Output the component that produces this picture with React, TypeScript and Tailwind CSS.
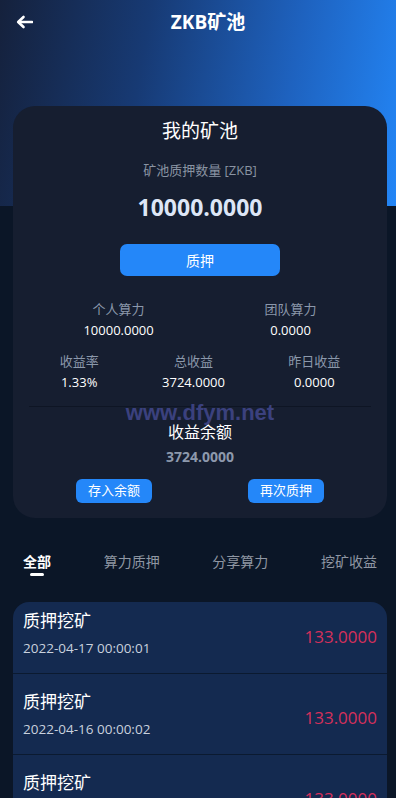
import React from "react";

const items = [
  { t: "质押挖矿", d: "2022-04-17 00:00:01", a: "133.0000" },
  { t: "质押挖矿", d: "2022-04-16 00:00:02", a: "133.0000" },
  { t: "质押挖矿", d: "2022-04-15 00:00:01", a: "133.0000" },
];

function Stat({ label, value }: { label: string; value: string }) {
  return (
    <div className="flex flex-col items-center">
      <div className="text-[13px] leading-[20px] text-[#8b98ab]">{label}</div>
      <div className="mt-[1px] text-[13px] leading-[20px] text-white">{value}</div>
    </div>
  );
}

export default function App() {
  return (
    <div className="h-[798px] w-[396px] overflow-hidden bg-[#0b1627]">
      <div
        className="relative h-[798px] w-[400px] bg-[#0b1627]"
        style={{ fontFamily: '"Open Sans", "Noto Sans CJK SC", sans-serif' }}
      >
        <div className="h-[206px] bg-[linear-gradient(100deg,#15213c_0%,#173a74_35%,#1e62bf_70%,#2387f8_100%)]">
          <div className="relative flex h-[44px] items-center justify-center pl-[16px]">
            <svg
              className="absolute left-[16px] top-[15px]"
              width="17"
              height="14"
              viewBox="0 0 17 14"
              fill="none"
            >
              <path d="M16 7H3" stroke="white" strokeWidth="2.6" strokeLinecap="round" />
              <path d="M7.5 2L2.2 7l5.3 5" stroke="white" strokeWidth="2.6" strokeLinecap="round" strokeLinejoin="round" />
            </svg>
            <div className="text-[19px] font-bold leading-[24px] text-white">ZKB矿池</div>
          </div>
        </div>

        <div className="relative mx-[13px] -mt-[100px] rounded-[22px] bg-[#161e30] px-[15px] pt-[13px] pb-[15px]">
          <div className="text-center text-[19px] leading-[24px] text-white">我的矿池</div>
          <div className="mt-[17px] text-center text-[13px] leading-[20px] text-[#8a94a3]">矿池质押数量 [ZKB]</div>
          <div className="mt-[12px] text-center text-[23px] font-bold leading-[30px] text-[#dde6f6]">10000.0000</div>
          <div className="mt-[22px] flex justify-center">
            <div className="flex h-[32px] w-[160px] items-center justify-center rounded-[7px] bg-[#2487f9] text-[14px] text-white">
              质押
            </div>
          </div>
          <div className="mt-[23px] flex justify-around">
            <Stat label="个人算力" value="10000.0000" />
            <Stat label="团队算力" value="0.0000" />
          </div>
          <div className="mt-[11px] flex justify-around">
            <Stat label="收益率" value="1.33%" />
            <Stat label="总收益" value="3724.0000" />
            <Stat label="昨日收益" value="0.0000" />
          </div>
          <div className="mx-[1px] mt-[14px] h-px bg-[#0e1524]" />
          <div className="mt-[13px] text-center text-[16px] leading-[24px] text-white">收益余额</div>
          <div className="mt-[3px] text-center text-[14px] font-bold leading-[20px] text-[#8d99ac]">3724.0000</div>
          <div className="mt-[12px] flex justify-around">
            <div className="flex h-[24px] w-[76px] items-center justify-center rounded-[6px] bg-[#2487f9] text-[13px] text-white">
              存入余额
            </div>
            <div className="flex h-[24px] w-[76px] items-center justify-center rounded-[6px] bg-[#2487f9] text-[13px] text-white">
              再次质押
            </div>
          </div>
          <div
            className="pointer-events-none absolute left-0 right-0 top-[294px] text-center text-[22px] font-bold leading-[26px] text-[#3b417e]"
            style={{ fontFamily: '"Liberation Sans", Arial, sans-serif' }}
          >
            www.dfym.net
          </div>
        </div>

        <div className="mt-[34px] flex items-start justify-between px-[23px]">
          <div className="flex flex-col items-center">
            <div className="text-[14px] font-bold leading-[20px] text-white">全部</div>
            <div className="mt-[1px] h-[3px] w-[14px] rounded-full bg-white" />
          </div>
          <div className="text-[14px] leading-[20px] text-[#8f96a3]">算力质押</div>
          <div className="text-[14px] leading-[20px] text-[#8f96a3]">分享算力</div>
          <div className="text-[14px] leading-[20px] text-[#8f96a3]">挖矿收益</div>
        </div>

        <div className="mx-[13px] mt-[26px] overflow-hidden rounded-t-[16px] bg-[#142a50]">
          <div className="-mt-[9px]">
            {items.map((it, i) => (
              <div key={i} className={i > 0 ? "border-t border-[#0b1a30]" : ""}>
                <div className="relative h-[80px] px-[10px]">
                  <div className="absolute left-[10px] top-[17px] text-[17px] leading-[22px] text-white">{it.t}</div>
                  <div className="absolute left-[10px] top-[45px] text-[13.5px] leading-[20px] text-[#c9d1de]">{it.d}</div>
                  <div className="absolute right-[10px] top-[33px] text-[17px] leading-[22px] text-[#d6305b]">{it.a}</div>
                </div>
              </div>
            ))}
          </div>
        </div>
      </div>
    </div>
  );
}
